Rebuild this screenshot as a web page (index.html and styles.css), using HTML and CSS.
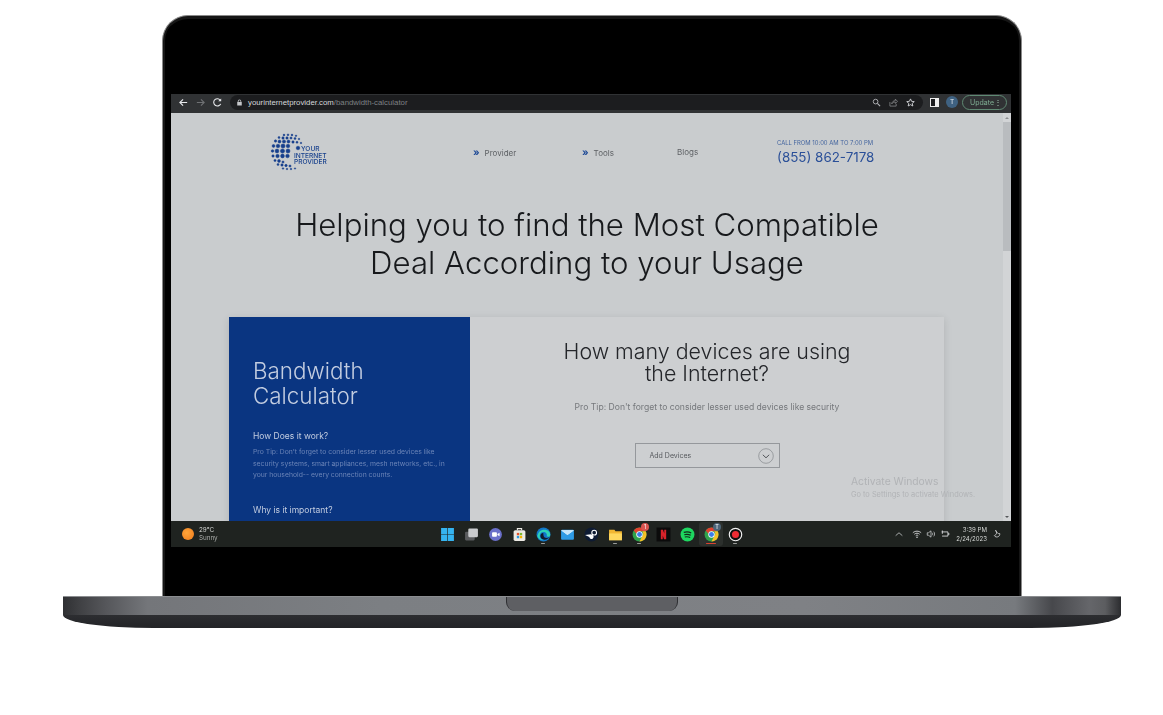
FILE: index.html
```html
<!DOCTYPE html>
<html lang="en">
<head>
    <meta charset="UTF-8">
    <meta name="viewport" content="width=device-width, initial-scale=1.0">
    <title>Bandwidth Calculator</title>
    <link rel="stylesheet" href="styles.css">
</head>
<body>
    <div class="laptop">
        <div class="lid">
            <div class="screen">
                <div class="browser-bar">
                    <svg class="nav-icon" viewBox="0 0 12 12"><path d="M10 6H2M5.500 2.500 2 6l3.500 3.500" fill="none" stroke="#e8eaed" stroke-width="1.200"/></svg>
                    <svg class="nav-icon" viewBox="0 0 12 12"><path d="M2 6h8M6.500 2.500 10 6l-3.500 3.500" fill="none" stroke="#6f7174" stroke-width="1.200"/></svg>
                    <svg class="nav-icon" viewBox="0 0 12 12"><path d="M9.500 7.500A4 4 0 1 1 9.300 3.800" fill="none" stroke="#e8eaed" stroke-width="1.200"/><path d="M10 1.500v3.200H6.800z" fill="#e8eaed"/></svg>
                    <div class="omnibox">
                        <svg class="lock" viewBox="0 0 8 8"><path d="M2 3.500V2.500a2 2 0 0 1 4 0v1h.6V7.500H1.400V3.500zM2.900 3.500h2.200V2.500a1.100 1.100 0 0 0-2.200 0z" fill="#c4c6c9"/></svg>
                        <span class="url">yourinternetprovider.com<span class="url-path">/bandwidth-calculator</span></span>
                        <span class="omni-icons">
                            <svg viewBox="0 0 10 10"><circle cx="4" cy="4" r="2.600" fill="none" stroke="#b5b7ba"/><path d="m6 6 3 3" stroke="#b5b7ba" stroke-width="1.200"/></svg>
                            <svg viewBox="0 0 10 10"><path d="M1 4.500V9h7V6.500M3 6.500C3.500 4 5 3 7 3V1.200L9.500 3.800 7 6V4.500C5.500 4.500 4 5 3 6.500z" fill="none" stroke="#8f9194" stroke-width=".8"/></svg>
                            <svg viewBox="0 0 10 10"><path d="M5 1l1.200 2.700 3 .3-2.300 2 .7 2.900L5 7.400 2.400 8.900l.7-2.900L.8 4l3-.3z" fill="none" stroke="#d5d7da"/></svg>
                        </span>
                    </div>
                    <span class="side-panel"></span>
                    <span class="avatar">T</span>
                    <span class="update">Update<span class="update-dots">⋮</span></span>
                </div>

                <div class="viewport">
                    <div class="page">
                        <header class="site-header">
                            <svg class="logo" viewBox="0 0 60 38">
                                <g fill="#163f8c" stroke="#163f8c" stroke-width=".5">
                                    <circle cx="14" cy="2" r=".9"/><circle cx="18" cy="1.800" r=".9"/><circle cx="22" cy="2" r=".9"/><circle cx="26" cy="2.800" r=".8"/>
                                    <circle cx="9" cy="4.500" r="1"/><circle cx="13" cy="5" r="1.200"/><circle cx="17" cy="5" r="1.200"/><circle cx="21" cy="5" r="1.100"/><circle cx="25" cy="5.500" r="1"/><circle cx="29" cy="6" r=".8"/>
                                    <circle cx="5.500" cy="8" r="1.200"/><circle cx="9.500" cy="8.500" r="1.500"/><circle cx="14" cy="8.500" r="1.600"/><circle cx="18.500" cy="8.500" r="1.500"/><circle cx="23" cy="9" r="1.200"/><circle cx="27" cy="9.300" r="1"/><circle cx="31" cy="10" r=".8"/>
                                    <circle cx="3.500" cy="13" r="1.400"/><circle cx="8" cy="13" r="1.800"/><circle cx="13" cy="13" r="2"/><circle cx="18" cy="13" r="1.800"/><circle cx="28" cy="15" r="1.800"/>
                                    <circle cx="2.500" cy="18" r="1.300"/><circle cx="7" cy="18" r="1.900"/><circle cx="12.500" cy="18" r="2.100"/><circle cx="18" cy="18" r="2"/>
                                    <circle cx="3" cy="23" r="1.200"/><circle cx="7.500" cy="23" r="1.700"/><circle cx="12.500" cy="23" r="1.900"/><circle cx="17.500" cy="23" r="1.800"/>
                                    <circle cx="5" cy="27.500" r="1.100"/><circle cx="9" cy="28" r="1.400"/><circle cx="13" cy="29" r="1.100"/>
                                    <circle cx="8" cy="31.500" r="1"/><circle cx="12" cy="32" r="1.200"/><circle cx="16" cy="32.500" r="1.200"/><circle cx="20" cy="33" r="1.100"/>
                                    <circle cx="13" cy="35.500" r=".8"/><circle cx="17" cy="36" r=".8"/><circle cx="21" cy="36" r=".8"/><circle cx="25" cy="35.500" r=".7"/>
                                </g>
                                <text class="logo-text" x="31" y="18">YOUR</text>
                                <text class="logo-text" x="24" y="24.500">INTERNET</text>
                                <text class="logo-text" x="24" y="30.500">PROVIDER</text>
                            </svg>
                            <a class="nav-link"><span class="nav-mark">»</span>Provider</a>
                            <a class="nav-link"><span class="nav-mark">»</span>Tools</a>
                            <a class="nav-link">Blogs</a>
                            <div class="phone">
                                <div class="phone-hours">CALL FROM 10:00 AM TO 7:00 PM</div>
                                <div class="phone-number">(855) 862-7178</div>
                            </div>
                        </header>

                        <h1 class="hero-title">Helping you to find the Most Compatible<br>Deal According to your Usage</h1>

                        <section class="calculator">
                            <aside class="calc-side">
                                <h2 class="calc-title">Bandwidth<br>Calculator</h2>
                                <h3 class="side-heading">How Does it work?</h3>
                                <p class="side-text">Pro Tip: Don't forget to consider lesser used devices like security systems, smart appliances, mesh networks, etc., in your household-- every connection counts.</p>
                                <h3 class="side-heading side-heading-next">Why is it important?</h3>
                            </aside>
                            <div class="calc-main">
                                <h2 class="calc-question">How many devices are using<br>the Internet?</h2>
                                <p class="calc-tip">Pro Tip: Don't forget to consider lesser used devices like security</p>
                                <div class="device-select">
                                    <span>Add Devices</span>
                                    <svg class="select-arrow" viewBox="0 0 16 16"><circle cx="8" cy="8" r="7.300" fill="none" stroke="#8d9094" stroke-width=".8"/><path d="m4.800 6.800 3.200 3 3.200-3" fill="none" stroke="#55585c"/></svg>
                                </div>
                            </div>
                        </section>
                    </div>
                    <div class="scrollbar">
                        <span class="scroll-up"></span>
                        <span class="scroll-thumb"></span>
                        <span class="scroll-down"></span>
                    </div>
                    <div class="activate">
                        <div class="activate-title">Activate Windows</div>
                        <div class="activate-sub">Go to Settings to activate Windows.</div>
                    </div>
                </div>

                <footer class="taskbar">
                    <div class="weather">
                        <span class="sun"></span>
                        <div class="weather-text"><div>29°C</div><div class="weather-sub">Sunny</div></div>
                    </div>
                    <div class="task-icons">
                        <span class="task-icon"><svg viewBox="0 0 14 14"><path d="M1 1h5.700v5.700H1zM7.300 1H13v5.700H7.300zM1 7.300h5.700V13H1zM7.300 7.300H13V13H7.300z" fill="#35b4f0"/></svg></span>
                        <span class="task-icon"><svg viewBox="0 0 14 14"><rect x="1" y="4.500" width="9" height="8" rx="1" fill="#5a5c5e"/><rect x="4" y="1.500" width="9" height="8" rx="1" fill="#c9cbcd"/></svg></span>
                        <span class="task-icon"><svg viewBox="0 0 14 14"><circle cx="7" cy="7" r="6" fill="#6a6fc9"/><rect x="3.800" y="5" width="4.500" height="4" rx=".8" fill="#fff"/><path d="m8.800 6.500 2-1.200v3.400l-2-1.200z" fill="#fff"/></svg></span>
                        <span class="task-icon"><svg viewBox="0 0 14 14"><rect x="1.500" y="3" width="11" height="10" rx="1.500" fill="#eceae4"/><path d="M5 3V1.500h4V3" fill="none" stroke="#eceae4"/><rect x="4.500" y="5.500" width="2.200" height="2.200" fill="#e2512b"/><rect x="7.300" y="5.500" width="2.200" height="2.200" fill="#7cb82f"/><rect x="4.500" y="8.300" width="2.200" height="2.200" fill="#2a9be3"/><rect x="7.300" y="8.300" width="2.200" height="2.200" fill="#f7b500"/></svg></span>
                        <span class="task-icon"><svg viewBox="0 0 14 14"><circle cx="7" cy="7" r="6.500" fill="#1277c9"/><path d="M1.500 8C2 4 5 2.500 8 2.500c3 0 5.300 2 5.300 4.700 0 1.800-2 2.300-3.300 1.500.7-2.500-1-4-3-4-2.300 0-3.700 1.700-3.500 4 .2 2 2 3.500 4 3.500-3 .5-6-1-6.500-4.700z" fill="#2ed3b7"/><path d="M6.800 5.500c-1.800 0-2.800 1.500-2.700 3.200.2 2 2 3.300 4 3.100 2-.2 3.600-1 4.500-2.500-1.200 1-3.500 1.200-4.500.5-1-.7-1.300-2.600-1.300-4.300z" fill="#111c2c"/></svg><i class="run-dot"></i></span>
                        <span class="task-icon"><svg viewBox="0 0 14 14"><rect x="1" y="2.500" width="12" height="9.500" rx="1" fill="#2f9be6"/><path d="M1 3l6 4.500L13 3" fill="#e3f2fd"/><path d="M1 3h12L7 7.500z" fill="#c6e6fb"/></svg></span>
                        <span class="task-icon"><svg viewBox="0 0 14 14"><circle cx="7" cy="7" r="6.500" fill="#0e1b33"/><circle cx="9.500" cy="5.300" r="2.200" fill="none" stroke="#fff"/><path d="M1 7.500 5 9.300a2 2 0 1 0 3-1.800L6.500 6.700z" fill="#fff"/></svg></span>
                        <span class="task-icon"><svg viewBox="0 0 14 14"><path d="M1 2.500h5l1 1.500h6v8H1z" fill="#f2b632"/><rect x="1" y="6" width="12" height="6.500" fill="#ffd75e"/></svg><i class="run-dot"></i></span>
                        <span class="task-icon"><svg viewBox="0 0 14 14"><use href="#chrome-logo"/></svg><i class="task-badge task-badge-red">1</i><i class="run-dot"></i></span>
                        <span class="task-icon"><svg viewBox="0 0 14 14"><rect x=".5" y=".5" width="13" height="13" fill="#0b0b0b"/><path d="M4.500 2.500h2l3 9h-2zM4.500 2.500h1.800v9H4.500zM7.700 2.500h1.800v9H7.700z" fill="#d8232a"/></svg></span>
                        <span class="task-icon"><svg viewBox="0 0 14 14"><circle cx="7" cy="7" r="6.500" fill="#1ed760"/><path d="M3.500 5c2.500-.8 5-.6 7 .6M4 7.200c2-.6 4.300-.4 6 .6M4.500 9.300c1.700-.4 3.400-.3 5 .5" fill="none" stroke="#12291a" stroke-width="1.100"/></svg></span>
                        <span class="task-icon task-icon-active"><svg viewBox="0 0 14 14"><use href="#chrome-logo"/></svg><i class="task-badge task-badge-slate">T</i><i class="run-bar"></i></span>
                        <span class="task-icon"><svg viewBox="0 0 14 14"><circle cx="7" cy="7" r="5.800" fill="#111" stroke="#f2f2f2" stroke-width="1.100"/><circle cx="7" cy="7" r="3.300" fill="#ee2c34"/></svg><i class="run-dot"></i></span>
                    </div>
                    <div class="tray">
                        <svg class="tray-icon tray-chevron" viewBox="0 0 12 12"><path d="m2 8 4-3.500L10 8" fill="none" stroke="#d2d4d6" stroke-width=".9"/></svg>
                        <svg class="tray-icon" viewBox="0 0 12 12"><path d="M1 4.500c3-2.500 7-2.500 10 0M2.800 6.300c2-1.700 4.400-1.700 6.400 0M4.500 8c1-.8 2-.8 3 0" fill="none" stroke="#e4e6e8"/><circle cx="6" cy="9.800" r=".9" fill="#e4e6e8"/></svg>
                        <svg class="tray-icon" viewBox="0 0 12 12"><path d="M1.500 4.500H3L6 2.200v7.600L3 7.500H1.500z" fill="none" stroke="#e4e6e8" stroke-width=".8"/><path d="M7.500 4.500c.7.800.7 2.200 0 3M9.300 3.200c1.300 1.500 1.300 4.100 0 5.600" fill="none" stroke="#e4e6e8" stroke-width=".8"/></svg>
                        <svg class="tray-icon" viewBox="0 0 12 12"><path d="M2 3.500h7.500v5H2.500M2.800 1.800v4" fill="none" stroke="#e4e6e8"/><path d="M9.800 5h1.400v2H9.800z" fill="#e4e6e8"/></svg>
                        <div class="clock"><div>3:39 PM</div><div>2/24/2023</div></div>
                        <svg class="tray-icon moon" viewBox="0 0 12 12"><path d="M5.500 1.500c2 2.500 1.500 5-1.500 6.500 2 3 7 1.500 6.500-2.500-1.500.5-4-.8-5-4z" fill="none" stroke="#e4e6e8" stroke-width=".9"/></svg>
                    </div>
                </footer>
            </div>
        </div>
        <div class="base">
            <div class="base-top"><div class="notch"></div></div>
        </div>
    </div>

    <svg class="defs" width="0" height="0">
        <defs>
            <g id="chrome-logo">
                <circle cx="7" cy="7" r="6.500" fill="#2fa24b"/>
                <path d="M7 .5a6.500 6.500 0 0 1 5.800 3.500H7a3 3 0 0 0-2.900 2.200L1.600 3.200A6.500 6.500 0 0 1 7 .5z" fill="#e2402f"/>
                <path d="M12.800 4A6.500 6.500 0 0 1 7 13.500L9.600 8.500A3 3 0 0 0 9.400 4z" fill="#f6c026"/>
                <circle cx="7" cy="7" r="3" fill="#fff"/>
                <circle cx="7" cy="7" r="2.300" fill="#3b7de8"/>
            </g>
        </defs>
    </svg>
</body>
</html>
```

FILE: styles.css
```css
body {
    margin: 0;
    background-color: #ffffff;
    font-family: 'Inter', 'Liberation Sans', sans-serif;
    overflow: hidden;
}
h1, h2, h3, p {
    margin: 0;
    font-weight: 400;
}
.defs {
    display: block;
}
.laptop {
    width: 1058px;
    margin-left: 63px;
    padding-top: 15px;
}
.lid {
    box-sizing: border-box;
    width: 860px;
    height: 581px;
    margin: 0 auto;
    padding: 78px 10px 49px 8px;
    background-color: #000000;
    border: 1px solid #8a8a8a;
    border-bottom: none;
    border-radius: 26px 26px 0 0;
    box-shadow: inset 0 3px 0 #161616, inset 2px 0 0 #161616, inset -2px 0 0 #161616;
}
.screen {
    display: flex;
    flex-direction: column;
    height: 453px;
    filter: blur(0.35px);
}

/* browser toolbar */
.browser-bar {
    display: flex;
    align-items: center;
    flex: 0 0 19px;
    box-sizing: border-box;
    padding: 0 4px 3px 7px;
    background-color: #303234;
}
.nav-icon {
    width: 11px;
    height: 11px;
    margin-right: 6px;
}
.omnibox {
    display: flex;
    align-items: center;
    width: 693px;
    height: 15px;
    margin-left: 1px;
    padding-left: 6px;
    box-sizing: border-box;
    background-color: #1c1d1f;
    border-radius: 8px;
}
.lock {
    width: 7px;
    height: 7px;
    margin-right: 5px;
}
.url {
    font-family: 'Liberation Sans', sans-serif;
    font-size: 7.800px;
    color: #d6d8da;
}
.url-path {
    color: #7e8185;
}
.omni-icons {
    display: flex;
    gap: 8px;
    margin-left: auto;
    margin-right: 8px;
}
.omni-icons svg {
    width: 9px;
    height: 9px;
}
.side-panel {
    width: 9px;
    height: 9px;
    margin-left: 7px;
    box-sizing: border-box;
    background-color: #1c1d1f;
    border: 1px solid #eeeeee;
    border-right-width: 4px;
}
.avatar {
    width: 12px;
    height: 12px;
    margin-left: 7px;
    border-radius: 50%;
    background-color: #3f6282;
    color: #e8edf2;
    font-size: 6.500px;
    line-height: 12px;
    text-align: center;
}
.update {
    display: flex;
    justify-content: space-between;
    align-items: center;
    box-sizing: border-box;
    width: 45px;
    height: 15px;
    margin-left: 4px;
    padding: 0 4px 0 7px;
    border: 1px solid #5f8a73;
    border-radius: 8px;
    color: #7fae93;
    font-size: 7px;
}
.update-dots {
    font-size: 8px;
    color: #a9cdb8;
}

/* page under the toolbar */
.viewport {
    display: flex;
    position: relative;
    flex: 1;
    min-height: 0;
    background-color: #c9ccce;
    overflow: hidden;
}
.page {
    flex: 1;
    min-width: 0;
}
.scrollbar {
    display: flex;
    flex-direction: column;
    align-items: center;
    flex: 0 0 8px;
    background-color: #d2d4d6;
}
.scroll-up, .scroll-down {
    width: 0;
    height: 0;
    border-left: 2px solid transparent;
    border-right: 2px solid transparent;
}
.scroll-up {
    margin: 4px 0 3px;
    border-bottom: 2px solid #8b8d90;
}
.scroll-down {
    margin: auto 0 3px;
    border-top: 2px solid #55575a;
}
.scroll-thumb {
    width: 8px;
    height: 129px;
    background-color: #b9bcbf;
}
.site-header {
    display: grid;
    grid-template-columns: 203px 109px 95px 100px auto;
    align-items: center;
    height: 40px;
    margin-top: 19px;
    margin-left: 99px;
}
.logo {
    width: 60px;
    height: 38px;
}
.logo-text {
    fill: #163f8c;
    font-size: 6.600px;
    font-family: 'Inter', sans-serif;
    font-weight: 500;
}
.nav-link {
    color: #5d6064;
    font-size: 8px;
}
.nav-mark {
    margin-right: 5px;
    color: #1f4a97;
    font-size: 10px;
    font-weight: 700;
}
.phone {
    align-self: start;
    padding-top: 7px;
    color: #2a4f98;
}
.phone-hours {
    font-size: 5.900px;
    line-height: 8px;
    color: #44659f;
}
.phone-number {
    margin-top: 2px;
    font-size: 13.400px;
    line-height: 16px;
}
.hero-title {
    margin-top: 34px;
    color: #17191c;
    font-size: 31.200px;
    font-weight: 300;
    line-height: 38px;
    text-align: center;
}
.calculator {
    display: flex;
    width: 715px;
    height: 300px;
    margin: 35px 0 0 58px;
    box-shadow: 0 2px 8px rgba(0, 0, 0, 0.12);
}
.calc-side {
    box-sizing: border-box;
    flex: 0 0 241px;
    padding: 41px 24px 0;
    background-color: #0a3581;
}
.calc-title {
    color: #c3cde0;
    font-size: 22.400px;
    font-weight: 300;
    line-height: 25px;
}
.side-heading {
    margin-top: 22px;
    color: #c3cde0;
    font-size: 8.500px;
    line-height: 12px;
}
.side-heading-next {
    margin-top: 23px;
}
.side-text {
    margin-top: 4px;
    color: #6b84b7;
    font-size: 6.800px;
    line-height: 11.500px;
}
.calc-main {
    flex: 1;
    text-align: center;
    background-color: #cdcfd1;
}
.calc-question {
    margin-top: 23px;
    color: #24262a;
    font-size: 21.400px;
    font-weight: 300;
    line-height: 22px;
}
.calc-tip {
    margin-top: 17px;
    color: #75787c;
    font-size: 8.600px;
    line-height: 12px;
}
.device-select {
    display: flex;
    justify-content: space-between;
    align-items: center;
    box-sizing: border-box;
    width: 145px;
    height: 25px;
    margin: 30px auto 0;
    padding: 0 5px 0 14px;
    border: 1px solid #95989c;
    color: #56595d;
    font-size: 7px;
}
.select-arrow {
    width: 16px;
    height: 16px;
}

/* watermark lies over the page */
.activate {
    position: absolute;
    left: 680px;
    top: 362px;
    color: #b1b3b6;
}
.activate-title {
    font-size: 10.300px;
    line-height: 13px;
}
.activate-sub {
    font-size: 7.400px;
    line-height: 13px;
}

/* windows taskbar */
.taskbar {
    display: grid;
    grid-template-columns: 1fr auto 1fr;
    align-items: center;
    flex: 0 0 26px;
    background-color: #1f2320;
    color: #d6d8d6;
}
.weather {
    display: flex;
    align-items: center;
    padding-left: 11px;
}
.sun {
    width: 12px;
    height: 12px;
    margin-right: 5px;
    border-radius: 50%;
    background: radial-gradient(circle at 40% 40%, #ffa53a, #ee7a1c);
}
.weather-text {
    font-size: 6.300px;
    line-height: 8px;
}
.weather-sub {
    color: #a9aca9;
}
.task-icons {
    display: flex;
}
.task-icon {
    display: flex;
    position: relative;
    justify-content: center;
    align-items: center;
    width: 24px;
    height: 24px;
}
.task-icon svg {
    width: 15px;
    height: 15px;
}
.task-icon-active {
    background-color: #2c302d;
    border-radius: 3px;
}
.run-dot {
    position: absolute;
    bottom: 2px;
    left: 10px;
    width: 4px;
    height: 1.500px;
    border-radius: 1px;
    background-color: #9a9c9a;
}
.run-bar {
    position: absolute;
    bottom: 2px;
    left: 7px;
    width: 10px;
    height: 1.500px;
    border-radius: 1px;
    background-color: #d9432f;
}
.task-badge {
    position: absolute;
    top: 1px;
    right: 2px;
    width: 8px;
    height: 8px;
    border-radius: 50%;
    color: #ffffff;
    font-size: 5.500px;
    font-style: normal;
    line-height: 8px;
    text-align: center;
}
.task-badge-red {
    background-color: #d9534f;
}
.task-badge-slate {
    background-color: #4d6579;
}
.tray {
    display: flex;
    justify-content: flex-end;
    align-items: center;
    padding-right: 10px;
}
.tray-icon {
    width: 10px;
    height: 10px;
    margin-left: 4px;
}
.tray-chevron {
    margin-right: 4px;
}
.clock {
    margin-left: 6px;
    font-size: 6.100px;
    line-height: 9px;
    text-align: right;
}
.moon {
    margin-left: 4px;
}

/* laptop base */
.base {
    height: 32px;
    overflow: hidden;
    background: linear-gradient(#3a3b3f, #232427);
    border-radius: 0 0 90px 90px / 0 0 13px 13px;
}
.base-top {
    height: 19px;
    border-top: 1px solid #8b8d90;
    box-sizing: border-box;
    background: linear-gradient(90deg, #2f3033 0, #3f4043 1.500%, #55565a 4%, #74767a 8%, #7c7f83 30%, #7f8185 70%, #777a7e 90%, #47484c 93.500%, #65666a 97%, #5c5d60 98.500%, #2b2c2f 100%);
}
.notch {
    width: 172px;
    height: 14px;
    margin: 0 auto;
    background-color: #5e5f63;
    border: 1px solid #2e2f32;
    border-top: none;
    border-bottom: none;
    box-sizing: border-box;
    border-radius: 0 0 9px 9px;
}
```
